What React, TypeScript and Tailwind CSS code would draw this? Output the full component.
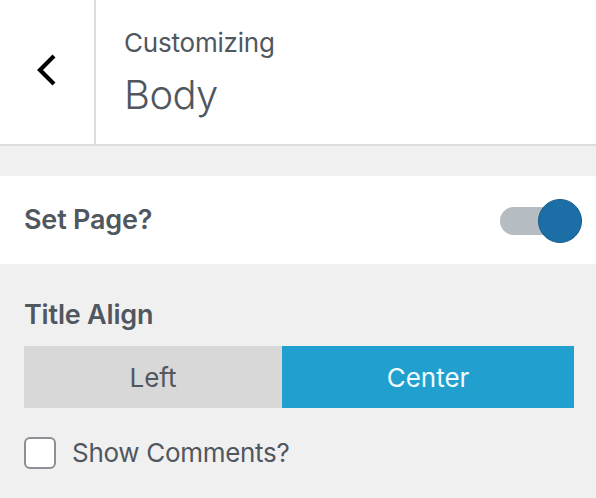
import { useState } from "react";

const FONT = { fontFamily: "Inter, 'Noto Sans', sans-serif" };

function BackChevron() {
  return (
    <svg width="24" height="34" viewBox="0 0 24 34" fill="none" aria-hidden>
      <path
        d="M19 3 L5 17 L19 31"
        stroke="#000"
        strokeWidth="4.2"
        strokeLinecap="butt"
        strokeLinejoin="miter"
      />
    </svg>
  );
}

export default function App() {
  const [setPage, setSetPage] = useState(true);
  const [align, setAlign] = useState<"left" | "center">("center");
  const [showComments, setShowComments] = useState(false);

  return (
    <div className="h-[498px] w-[596px] bg-[#f0f0f1] text-[#50575e]" style={FONT}>
      {/* header */}
      <div className="flex h-[146px] border-b-2 border-[#dcdcde] bg-white">
        <button
          type="button"
          aria-label="Back"
          className="flex w-[96px] shrink-0 items-center justify-center border-r-2 border-[#dcdcde] pb-[4px]"
        >
          <BackChevron />
        </button>
        <div className="pl-[28px] pt-[26px]">
          <div className="text-[26px] leading-[34px] tracking-[-0.2px]">Customizing</div>
          <div className="mt-[10px] text-[40px] font-light leading-[50px] tracking-[-0.6px]">Body</div>
        </div>
      </div>

      {/* toggle row */}
      <div className="mt-[30px] flex h-[88px] items-center justify-between bg-white pl-[24px] pr-[14px]">
        <span className="text-[27px] font-semibold tracking-[-0.2px]">Set Page?</span>
        <button
          type="button"
          aria-label="Set Page?"
          onClick={() => setSetPage((v) => !v)}
          className="relative mt-[2px] h-[44px] w-[82px]"
        >
          <span className="absolute left-0 top-[8px] h-[28px] w-[66px] rounded-full bg-[#b5bcc2]" />
          <span
            className={
              setPage
                ? "absolute right-0 top-0 h-[44px] w-[44px] rounded-full border border-[#155d8c] bg-[#1c6ea6]"
                : "absolute left-0 top-0 h-[44px] w-[44px] rounded-full border border-[#8c8f94] bg-white"
            }
          />
        </button>
      </div>

      {/* title align */}
      <div className="px-[22px] pl-[24px] pt-[35px]">
        <div className="text-[27px] font-semibold leading-[32px] tracking-[-0.2px]">Title Align</div>
        <div className="mt-[15px] flex h-[62px]">
          <button
            type="button"
            onClick={() => setAlign("left")}
            className={
              align === "left"
                ? "w-[258px] bg-[#21a0d0] text-[26px] text-white"
                : "w-[258px] bg-[#d8d8d8] text-[26px] text-[#50575e]"
            }
          >
            Left
          </button>
          <button
            type="button"
            onClick={() => setAlign("center")}
            className={
              align === "center"
                ? "flex-1 bg-[#21a0d0] text-[26px] text-[#f0fbff]"
                : "flex-1 bg-[#d8d8d8] text-[26px] text-[#50575e]"
            }
          >
            Center
          </button>
        </div>

        <label className="mt-[25px] flex cursor-pointer items-center gap-[16px]">
          <input
            type="checkbox"
            checked={showComments}
            onChange={(e) => setShowComments(e.target.checked)}
            className="h-[32px] w-[32px] appearance-none rounded-[6px] border-2 border-[#8c8f94] bg-white checked:bg-[#2271b1]"
          />
          <span className="text-[26px] tracking-[-0.3px]">Show Comments?</span>
        </label>
      </div>
    </div>
  );
}
